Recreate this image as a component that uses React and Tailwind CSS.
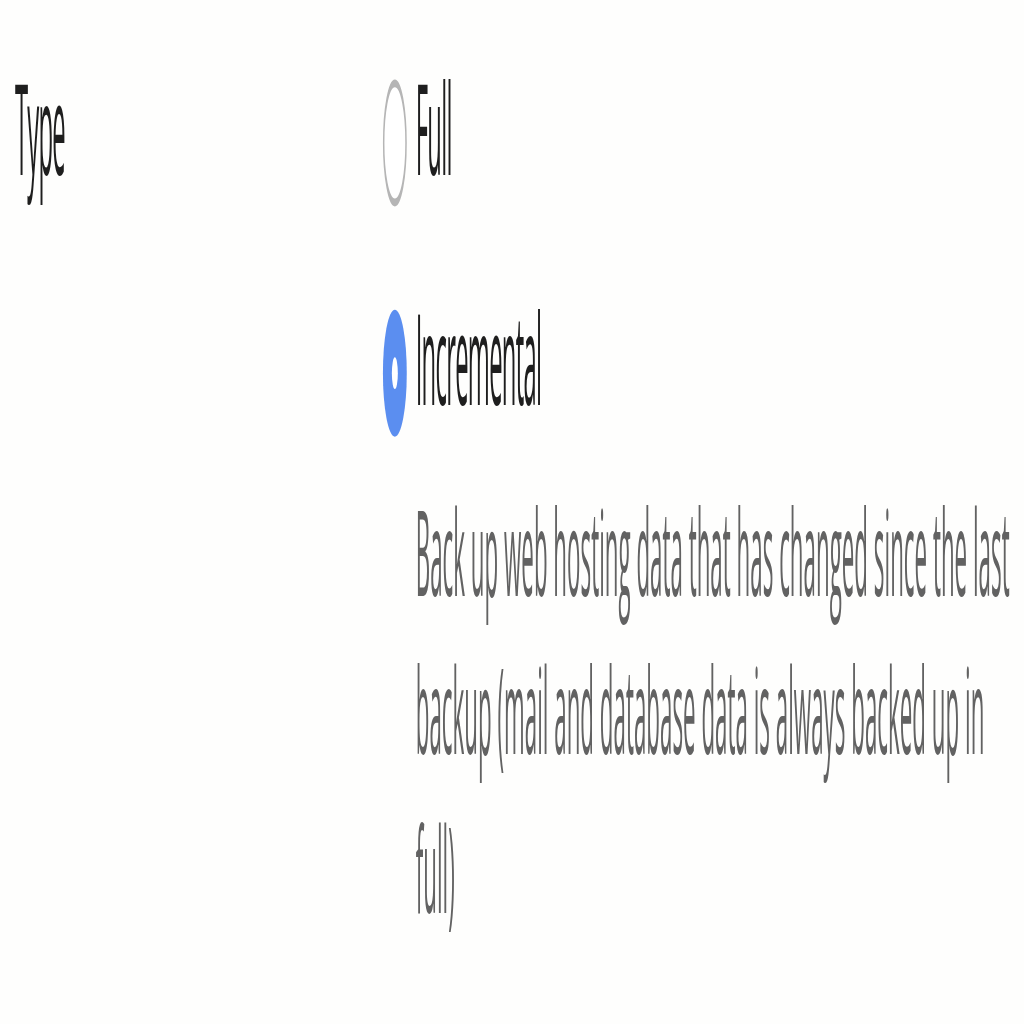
import React from "react";

function Radio({ checked }) {
  return checked ? (
    <span className="box-border flex h-4 w-4 shrink-0 items-center justify-center rounded-full bg-[#5b8ef0]">
      <span className="block h-[4px] w-[4px] rounded-full bg-white" />
    </span>
  ) : (
    <span className="box-border block h-4 w-4 shrink-0 rounded-full border border-[#b5b5b5] bg-white" />
  );
}

export default function App() {
  return (
    <div className="h-[1024px] w-[1024px] overflow-hidden bg-[#fefefd]">
      {/* the source is a small form row, stretched to fill the frame */}
      <div className="h-[130px] w-[687px] origin-top-left scale-x-[1.49] scale-y-[7.94] font-['Open_Sans',sans-serif]">
        <div className="flex pl-[10px] pt-[6.4px]">
          <div className="w-[247px] text-[16px] leading-[20px] tracking-[-0.5px] text-[#1e1e1e]">Type</div>
          <div className="flex flex-col">
            <label className="flex h-[20px] items-center gap-[6px]">
              <span className="mt-[2.6px] block">
                <Radio />
              </span>
              <span className="text-[16px] leading-[20px] tracking-[-0.5px] text-[#1e1e1e]">Full</span>
            </label>
            <label className="mt-[9px] flex h-[20px] items-center gap-[6px]">
              <span className="mt-[2.4px] block">
                <Radio checked />
              </span>
              <span className="text-[16px] leading-[20px] tracking-[-0.5px] text-[#1e1e1e]">Incremental</span>
            </label>
            <p className="mt-[3.4px] w-[426px] pl-[22px] text-[15px] leading-[20px] text-[#626262]">
              Back up web hosting data that has changed since the last backup (mail and database data is always backed up in full)
            </p>
          </div>
        </div>
      </div>
    </div>
  );
}
